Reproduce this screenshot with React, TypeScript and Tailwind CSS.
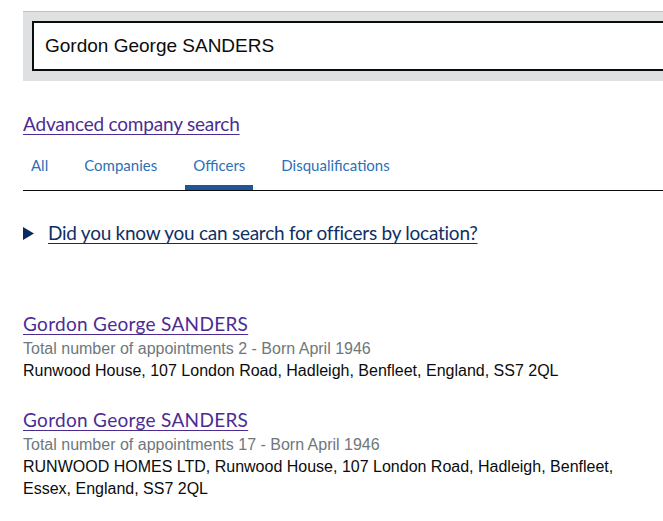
import React from "react";

const gds = { fontFamily: "Lato, 'Noto Sans', sans-serif" };

function Result({ count, address }: { count: number; address: string }) {
  return (
    <div className="mb-[26px]">
      <a
        href="#"
        style={gds}
        className="text-[19px] leading-[24px] tracking-[0.3px] text-[#4c2c92] underline decoration-1 underline-offset-[3px]"
      >
        Gordon George SANDERS
      </a>
      <div className="font-['Liberation_Sans',Arial,sans-serif] text-[16px] leading-[23px] text-[#6f777b]">
        Total number of appointments {count} - Born April 1946
      </div>
      <div className="font-['Liberation_Sans',Arial,sans-serif] text-[16px] leading-[22px] text-[#0b0c0c]">
        {address}
      </div>
    </div>
  );
}

export default function App() {
  return (
    <div className="w-[663px] h-[521px] overflow-hidden bg-white">
      <div className="pt-[11px] pl-[23px]">
        <div className="w-[700px] border-t border-[#bfc1c3] bg-[#dee0e2] pt-[9px] pb-[10px] pl-[9px]">
          <div className="h-[50px] border-2 border-[#0b0c0c] bg-white flex items-center pl-[11px]">
            <span className="font-['Liberation_Sans',Arial,sans-serif] text-[19px] text-[#0b0c0c]">
              Gordon George SANDERS
            </span>
          </div>
        </div>
      </div>

      <div className="pl-[23px] w-[640px]">
        <div className="mt-[31px]">
          <a
            href="#"
            style={gds}
            className="text-[19px] leading-[24px] tracking-[-0.2px] text-[#4c2c92] underline decoration-1 underline-offset-[3px]"
          >
            Advanced company search
          </a>
        </div>

        <div className="mt-[14px] flex border-b border-[#0b0c0c] w-[640px]" style={gds}>
          {[
            { t: "All", active: false },
            { t: "Companies", active: false },
            { t: "Officers", active: true },
            { t: "Disqualifications", active: false },
          ].map((tab) => (
            <div
              key={tab.t}
              className={
                "px-[8px] mr-[20px] pt-[4px] pb-[10px] text-[15px] leading-[20px] text-[#2b70b8] border-b-[5px] " +
                (tab.active ? "border-[#1d5596]" : "border-transparent")
              }
            >
              {tab.t}
            </div>
          ))}
        </div>

        <div className="mt-[30px] flex items-center" style={gds}>
          <svg width="11" height="13" viewBox="0 0 11 13" className="mr-[14px] shrink-0">
            <polygon points="0,0 11,6.5 0,13" fill="#0b2a5e" />
          </svg>
          <a
            href="#"
            className="text-[19px] leading-[24px] tracking-[-0.25px] text-[#0f2f66] underline decoration-1 underline-offset-[3px]"
          >
            Did you know you can search for officers by location?
          </a>
        </div>

        <div className="mt-[67px]">
          <Result
            count={2}
            address="Runwood House, 107 London Road, Hadleigh, Benfleet, England, SS7 2QL"
          />
          <Result
            count={17}
            address="RUNWOOD HOMES LTD, Runwood House, 107 London Road, Hadleigh, Benfleet, Essex, England, SS7 2QL"
          />
        </div>
      </div>
    </div>
  );
}
